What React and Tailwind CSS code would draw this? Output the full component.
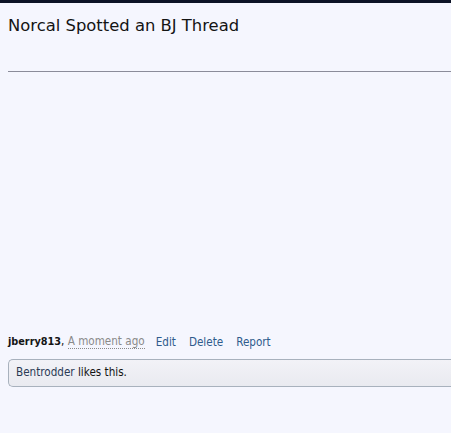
export default function App() {
  return (
    <div className="w-[451px] h-[433px] bg-[#f5f6fe] overflow-hidden font-['DejaVu_Sans',Verdana,sans-serif]">
      <div className="h-[3px] bg-[#0c1326]" />
      <div className="pl-2">
        <h1 className="pt-[13px] text-[16.4px] leading-[20px] text-[#141414]">Norcal Spotted an BJ Thread</h1>
        <div className="mt-[35px] h-px bg-[#8b8c9a]" />
        <div className="h-[262px]" />
        <div className="flex items-center text-[11.6px] leading-[14px] font-['DejaVu_Sans_Condensed','DejaVu_Sans',sans-serif]">
          <span className="mr-[11px]">
            <span className="font-bold text-[10.8px] text-[#141414]">jberry813</span>
            <span className="text-[#141414]">, </span>
            <span className="text-[#8a8a8a] border-b border-dotted border-[#8a8a8a]">A moment ago</span>
          </span>
          <span className="text-[#2e5b8c] mr-[13px]">Edit</span>
          <span className="text-[#2e5b8c] mr-[13px]">Delete</span>
          <span className="text-[#2e5b8c]">Report</span>
        </div>
        <div className="mt-[10px] h-[28px] border border-r-0 border-[#a8b1bd] rounded-l-[5px] bg-gradient-to-b from-[#f2f2f7] to-[#e9eaf0] flex items-center pl-[7px] text-[11.6px] font-['DejaVu_Sans_Condensed','DejaVu_Sans',sans-serif]">
          <span className="text-[#2a3a55]">Bentrodder</span>
          <span className="text-[#141414]">&nbsp;likes this.</span>
        </div>
      </div>
    </div>
  );
}
